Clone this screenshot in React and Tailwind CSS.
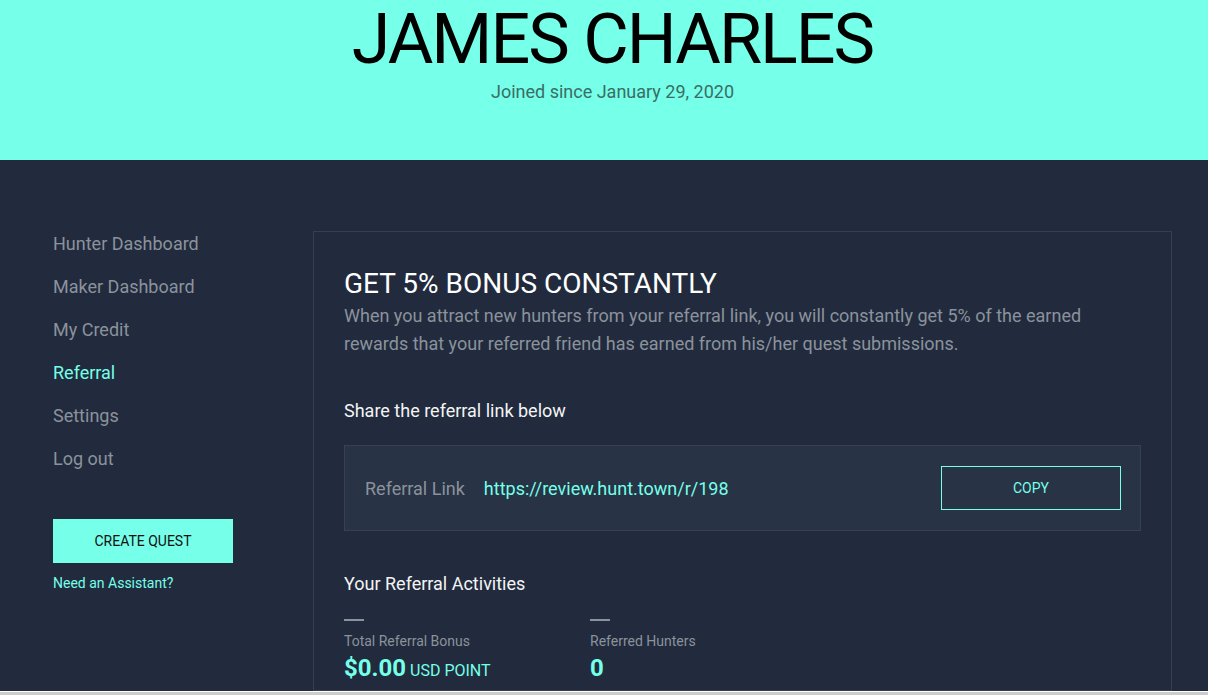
const navItems = [
  { label: 'Hunter Dashboard' },
  { label: 'Maker Dashboard' },
  { label: 'My Credit' },
  { label: 'Referral', active: true },
  { label: 'Settings' },
  { label: 'Log out' },
];

function Sidebar() {
  return (
    <aside className="w-[260px] shrink-0">
      <nav className="flex flex-col">
        {navItems.map((item) => (
          <a
            key={item.label}
            href="#"
            className={`h-[43px] flex items-center text-[18px] ${
              item.active ? 'text-[#76ffe9]' : 'text-[#8b929c]'
            }`}
          >
            {item.label}
          </a>
        ))}
      </nav>
      <button className="mt-[39px] w-[180px] h-[44px] bg-[#76ffe9] text-[#111] text-[14px] flex items-center justify-center">
        CREATE QUEST
      </button>
      <a href="#" className="block mt-[10px] text-[14px] leading-[20px] text-[#76ffe9]">
        Need an Assistant?
      </a>
    </aside>
  );
}

function Stat({ label, children }) {
  return (
    <div className="w-[246px]">
      <div className="w-[20px] h-[2px] bg-[#8b929c]" />
      <div className="mt-[10px] text-[14px] leading-[20px] text-[#8b929c]">{label}</div>
      <div className="mt-[1px] text-[#76ffe9] leading-[32px]">{children}</div>
    </div>
  );
}

function ReferralCard() {
  return (
    <section className="flex-1 mt-[9px] border border-[#353f51] px-[30px] pt-[34px] pb-10">
      <h2 className="text-[28px] leading-[36px] text-white">GET 5% BONUS CONSTANTLY</h2>
      <p className="text-[18px] leading-[28px] text-[#8b929c]">
        When you attract new hunters from your referral link, you will constantly get 5% of the earned rewards that
        your referred friend has earned from his/her quest submissions.
      </p>

      <h3 className="mt-[39px] text-[18px] leading-[28px] text-[#f4f4f4]">Share the referral link below</h3>

      <div className="mt-[20px] bg-[#283345] border border-[#37414f] px-[20px] py-[20px] flex items-center">
        <span className="text-[18px] text-[#8b929c]">Referral Link</span>
        <span className="ml-[19px] text-[18px] text-[#76ffe9]">https://review.hunt.town/r/198</span>
        <button className="ml-auto mr-[-1px] w-[180px] h-[44px] border border-[#76ffe9] text-[#76ffe9] text-[14px] flex items-center justify-center">
          COPY
        </button>
      </div>

      <h3 className="mt-[39px] text-[18px] leading-[28px] text-[#f4f4f4]">Your Referral Activities</h3>

      <div className="mt-[21px] flex">
        <Stat label="Total Referral Bonus">
          <span className="text-[24px] font-bold">$0.00</span>
          <span className="ml-[4px] text-[16px]">USD POINT</span>
        </Stat>
        <Stat label="Referred Hunters">
          <span className="text-[24px] font-bold">0</span>
        </Stat>
      </div>
    </section>
  );
}

export default function App() {
  return (
    <div className="h-[695px] flex flex-col overflow-hidden bg-[#212b3d]" style={{ fontFamily: 'Roboto, "Liberation Sans", sans-serif' }}>
      <header className="h-[160px] shrink-0 bg-[#76ffe9] flex flex-col items-center pt-[4px] pl-[17px]">
        <h1 className="text-[70px] leading-[70px] tracking-[-2px] text-black">JAMES CHARLES</h1>
        <p className="mt-[4px] text-[18px] leading-[28px] text-[#3a6d65]">Joined since January 29, 2020</p>
      </header>
      <main className="flex-1 min-h-0 overflow-hidden flex pl-[53px] pr-[36px] pt-[62px]">
        <Sidebar />
        <ReferralCard />
      </main>
      <div className="h-[4px] shrink-0 bg-[#cdcdcd] border-t border-white" />
    </div>
  );
}
